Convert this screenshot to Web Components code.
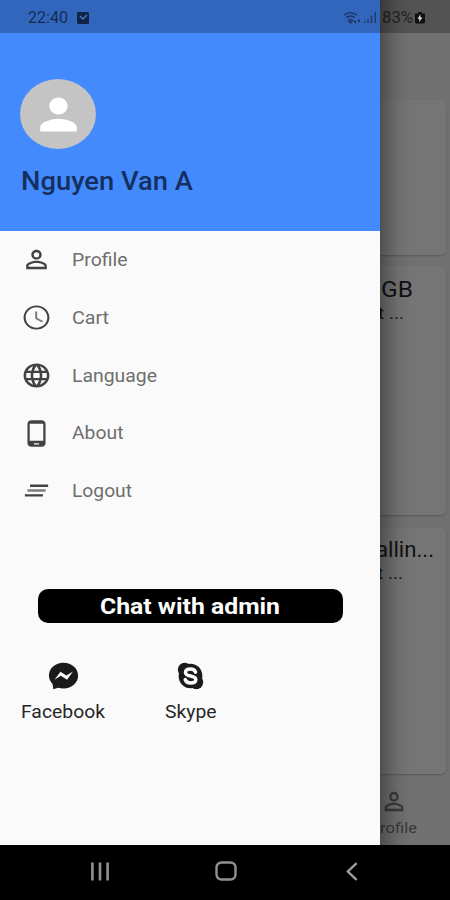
<!DOCTYPE html>
<html lang="en">
<head>
<meta charset="utf-8">
<title>Navigation drawer</title>
<style>
html,body{margin:0;padding:0;background:#000}
body{width:450px;height:900px;overflow:hidden;font-family:Roboto,"Open Sans",sans-serif}
</style>
</head>
<body>
<phone-screen></phone-screen>
<script>
const define = (name, html, init) => customElements.define(name, class extends HTMLElement {
  connectedCallback() {
    if (this.shadowRoot) return;
    const t = document.createElement('template');
    t.innerHTML = typeof html === 'function' ? html(this) : html;
    this.attachShadow({mode: 'open'}).append(t.content.cloneNode(true));
    if (init) init(this);
  }
});

// A single line of text stretched horizontally to a given width.
define('fit-text', el => `<style>
:host{display:block;width:${el.getAttribute('w')}px;white-space:nowrap;line-height:1.2}
span{display:inline-block;transform-origin:0 50%}
</style><span><slot></slot></span>`, el => {
  const s = el.shadowRoot.querySelector('span');
  const w = s.getBoundingClientRect().width;
  if (w) s.style.transform = `scaleX(${el.getAttribute('w') / w})`;
});

const ICONS = {
  person: '<path d="M12 5.9a2.1 2.1 0 1 1 0 4.2 2.1 2.1 0 0 1 0-4.2m0 9c2.97 0 6.1 1.46 6.1 2.1v1.1H5.9V17c0-.64 3.13-2.1 6.1-2.1M12 4C9.79 4 8 5.79 8 8s1.79 4 4 4 4-1.79 4-4-1.79-4-4-4zm0 9c-2.67 0-8 1.34-8 4v3h16v-3c0-2.66-5.33-4-8-4z"/>',
  clock: '<path d="M11.99 2C6.47 2 2 6.48 2 12s4.47 10 9.99 10C17.52 22 22 17.52 22 12S17.52 2 11.99 2zM12 20.4c-4.64 0-8.4-3.76-8.4-8.4S7.36 3.6 12 3.6s8.4 3.76 8.4 8.4-3.76 8.4-8.4 8.4z"/><path opacity=".7" d="M12.5 7H11v6l5.250 3.150.75-1.230-4.500-2.670z"/>',
  globe: '<path d="M11.99 2C6.470 2 2 6.480 2 12s4.470 10 9.990 10C17.520 22 22 17.520 22 12S17.520 2 11.990 2zm6.930 6h-2.950c-.32-1.250-.78-2.450-1.380-3.560 1.840.63 3.370 1.910 4.330 3.560zM12 4.040c.83 1.200 1.480 2.530 1.910 3.960h-3.820c.43-1.430 1.080-2.760 1.910-3.960zM4.260 14C4.100 13.360 4 12.690 4 12s.1-1.360.26-2h3.380c-.08.66-.14 1.320-.14 2 0 .68.06 1.340.14 2H4.260zm.82 2h2.950c.32 1.250.78 2.450 1.380 3.560-1.840-.63-3.370-1.900-4.330-3.560zm2.950-8H5.080c.96-1.660 2.490-2.930 4.330-3.560C8.810 5.550 8.350 6.750 8.030 8zM12 19.960c-.83-1.200-1.480-2.530-1.910-3.960h3.820c-.43 1.430-1.080 2.760-1.910 3.960zM14.340 14H9.660c-.09-.66-.16-1.320-.16-2 0-.68.07-1.350.16-2h4.680c.09.65.16 1.320.16 2 0 .68-.07 1.340-.16 2zm.25 5.560c.6-1.110 1.060-2.310 1.380-3.560h2.950c-.96 1.650-2.490 2.930-4.330 3.560zM16.360 14c.08-.66.14-1.320.14-2 0-.68-.06-1.340-.14-2h3.380c.16.64.26 1.310.26 2s-.1 1.360-.26 2h-3.380z"/>',
  phone: '<path d="M16 1H8C6.340 1 5 2.340 5 4v16c0 1.660 1.340 3 3 3h8c1.660 0 3-1.340 3-3V4c0-1.660-1.340-3-3-3zm-2 20h-4v-1h4v1zm3.250-3H6.750V4h10.500v14z"/>',
  lines: '<path d="M3 17h14v-2H3zM7 7v2h14V7z"/><path opacity=".7" d="M5 13h14v-2H5z"/>',
  messenger: '<path d="M12 2C6.360 2 2 6.130 2 11.700c0 2.400.9 4.600 2.500 6.300L5 22l3.300-1.100c1.150.33 2.400.5 3.700.5 5.640 0 10-4.130 10-9.700S17.640 2 12 2z"/><path fill="#fafafa" d="M5.800 14.900l4.100-6.100 4.100 2.900 4.500-3.100-4.100 6.200-4.200-3z"/>',
  skype: '<circle cx="12" cy="12" r="9.200"/><circle cx="7.500" cy="7.300" r="5.300"/><circle cx="16.500" cy="16.700" r="5.300"/><path fill="none" stroke="#fafafa" stroke-width="2.700" stroke-linecap="round" d="M15.900 9.100C15.200 7.300 13.800 6.800 12 6.800c-2.300 0-3.900.9-3.900 2.500 0 3.600 8 1.800 8 5.300 0 1.700-1.700 2.600-4 2.600-2.200 0-3.600-.8-4.200-2.500"/>'
};
define('ui-icon', el => `<style>
:host{display:block;width:31px;height:29px;flex:none}svg{display:block;width:100%;height:100%}
</style><svg viewBox="0 0 24 24" preserveAspectRatio="none" fill="currentColor">${ICONS[el.getAttribute('name')]}</svg>`);

define('status-bar', `<style>
:host{display:flex;align-items:center;box-sizing:border-box;height:33px;padding:2px 25px 0 28px;background:rgba(0,0,0,.26);color:rgba(0,0,0,.6);font-size:17px}
.gap{flex:1}.check{margin-left:9px}.wifi{margin-right:3px}.bars{margin-right:5px}.bat{margin-left:2px}
svg{display:block;flex:none}
</style>
<fit-text w="40">22:40</fit-text>
<svg class="check" width="12" height="12" viewBox="0 0 12 12"><rect width="12" height="12" rx="1.500" fill="#102447"/><path d="M3 4l3 3 4-4" fill="none" stroke="#4b77c4" stroke-width="1.400"/></svg>
<span class="gap"></span>
<svg class="wifi" width="18" height="14" viewBox="0 0 18 14" fill="none" stroke="#1c3763" stroke-width="1.500"><path d="M1 4.200q6.500-5 13 0M3.300 6.700q4.200-3.400 8.400 0M5.500 9.300q2-1.600 4 0l-2 2.500z"/><path d="M12 12V9.500M16 8.500v2.500" stroke-width="2"/></svg>
<svg class="bars" width="13" height="13" viewBox="0 0 13 13" fill="#213d6c"><path d="M0 10h1.500v2H0zM3.300 8h1.500v4H3.300zM6.600 4.500h1.600V12H6.600zM10.500 1H12v11h-1.500z"/></svg>
<fit-text w="31">83%</fit-text>
<svg class="bat" width="10" height="12" viewBox="0 0 11 13"><path d="M3.500 0h4v1.500H10q1 0 1 1V11q0 1.500-1.500 1.500h-8Q0 12.500 0 11V2.500q0-1 1-1h2.500z" fill="#111"/><path d="M6 2.500L2.800 7.300h2L4.500 11l3.800-5H6z" fill="#ddd"/></svg>`);

define('drawer-header', `<style>
:host{display:block;box-sizing:border-box;height:231px;padding:79px 0 0 20px;background:#448aff;color:#14305f}
.avatar{width:76px;height:70px;border-radius:50%;background:#c4c4c4;display:grid;place-items:center}
.avatar svg{display:block;width:55px;height:51px}
fit-text{margin:18px 0 0 1px;font-size:25px;font-weight:500}
</style>
<div class="avatar"><svg viewBox="0 0 24 24" preserveAspectRatio="none" fill="#fff"><path d="M12 12c2.210 0 4-1.790 4-4s-1.790-4-4-4-4 1.790-4 4 1.790 4 4 4zm0 2c-2.670 0-8 1.340-8 4v2h16v-2c0-2.660-5.330-4-8-4z"/></svg></div>
<fit-text w="172"><slot></slot></fit-text>`);

define('drawer-item', el => `<style>
:host{display:flex;align-items:center;height:57.750px;padding-left:20.500px;gap:20px;font-size:18px;color:#6e6e6e}
ui-icon{color:#424242}
</style><ui-icon name="${el.getAttribute('icon')}"></ui-icon><fit-text w="${el.getAttribute('w')}"><slot></slot></fit-text>`);

define('chat-button', `<style>
:host{display:grid;place-items:center;box-sizing:border-box;width:305px;height:34px;padding:1px 1px 0 0;margin:69px 0 0 38px;border-radius:10px;background:#000;color:#fff;font-size:22.500px;font-weight:700}
</style><fit-text w="180"><slot></slot></fit-text>`);

define('contact-link', el => `<style>
:host{display:flex;flex-direction:column;align-items:center;gap:9px;font-size:18px;color:#262626}
ui-icon{color:#1a1a1a;width:${el.getAttribute('iw')}px;height:32px}
</style><ui-icon name="${el.getAttribute('icon')}"></ui-icon><fit-text w="${el.getAttribute('w')}"><slot></slot></fit-text>`);

define('nav-drawer', `<style>
:host{display:block;width:380px;height:100%;background:#fafafa;overflow:hidden}
.links{display:flex;gap:59.500px;padding:37.250px 0 0 21px}
</style>
<drawer-header>Nguyen Van A</drawer-header>
<drawer-item icon="person" w="55.500">Profile</drawer-item>
<drawer-item icon="clock" w="37">Cart</drawer-item>
<drawer-item icon="globe" w="85">Language</drawer-item>
<drawer-item icon="phone" w="51.500">About</drawer-item>
<drawer-item icon="lines" w="60">Logout</drawer-item>
<chat-button>Chat with admin</chat-button>
<div class="links"><contact-link icon="messenger" iw="35" w="84">Facebook</contact-link><contact-link icon="skype" iw="31" w="51.500">Skype</contact-link></div>`);

// The strip of the shop page that stays visible beside the open drawer.
define('shop-peek', `<style>
:host{display:flex;flex-direction:column;width:70px;height:100%;overflow:hidden;background:#717171;color:#111;position:relative}
.card{box-sizing:border-box;width:66px;background:#757575;border-radius:0 5px 5px 0;box-shadow:0 1px 2px rgba(0,0,0,.22);flex:none;overflow:hidden}
.a{height:155px;margin-top:100px}.b{height:249px;margin-top:11px}.c{height:246px;margin-top:13px}
.b{padding:10px 0 0 1px}.c{padding:8px 0 0 0}
.title{font-size:22.500px}.sub{font-size:16px;margin:1px 0 0 -3px}
.c .title{margin-left:-4px}
.tab{display:flex;flex-direction:column;color:#3a3a3a;font-size:15px;margin-top:13px;gap:3px}
.tab ui-icon{width:28px;height:29px}
.shade{position:absolute;inset:0;background:linear-gradient(90deg,rgba(0,0,0,.32),rgba(0,0,0,.2) 8px,rgba(0,0,0,.07) 18px,transparent 32px)}
</style>
<div class="card a"></div>
<div class="card b"><fit-text class="title" w="32">GB</fit-text><fit-text class="sub" w="26">t ...</fit-text></div>
<div class="card c"><fit-text class="title" w="58">allin...</fit-text><fit-text class="sub" w="26">t ...</fit-text></div>
<div class="tab"><ui-icon name="person"></ui-icon><fit-text w="37">rofile</fit-text></div>
<div class="shade"></div>`);

define('system-nav', `<style>
:host{display:flex;align-items:center;justify-content:space-between;box-sizing:border-box;height:55px;padding:0 92px 3px 90px;background:#000}
svg{display:block}.home{margin-right:5px}
</style>
<svg width="20" height="19" viewBox="0 0 20 20" fill="none" stroke="#929292" stroke-width="2.700"><path d="M2 .5v19M10 .5v19M18 .5v19"/></svg>
<svg class="home" width="22" height="20" viewBox="0 0 22 20" fill="none" stroke="#929292" stroke-width="2.400"><rect x="1.500" y="1.500" width="19" height="17" rx="5"/></svg>
<svg width="12" height="19" viewBox="0 0 13 20" fill="none" stroke="#a0a0a0" stroke-width="2.500"><path d="M11.500 1L2 10l9.500 9"/></svg>`);

define('phone-screen', `<style>
:host{display:grid;grid-template-rows:845px 55px;width:450px;height:900px;position:relative;overflow:hidden}
main{display:flex;min-height:0}
status-bar{position:absolute;left:0;top:0;right:0}
</style><main><nav-drawer></nav-drawer><shop-peek></shop-peek></main><system-nav></system-nav><status-bar></status-bar>`);
</script>
</body>
</html>
